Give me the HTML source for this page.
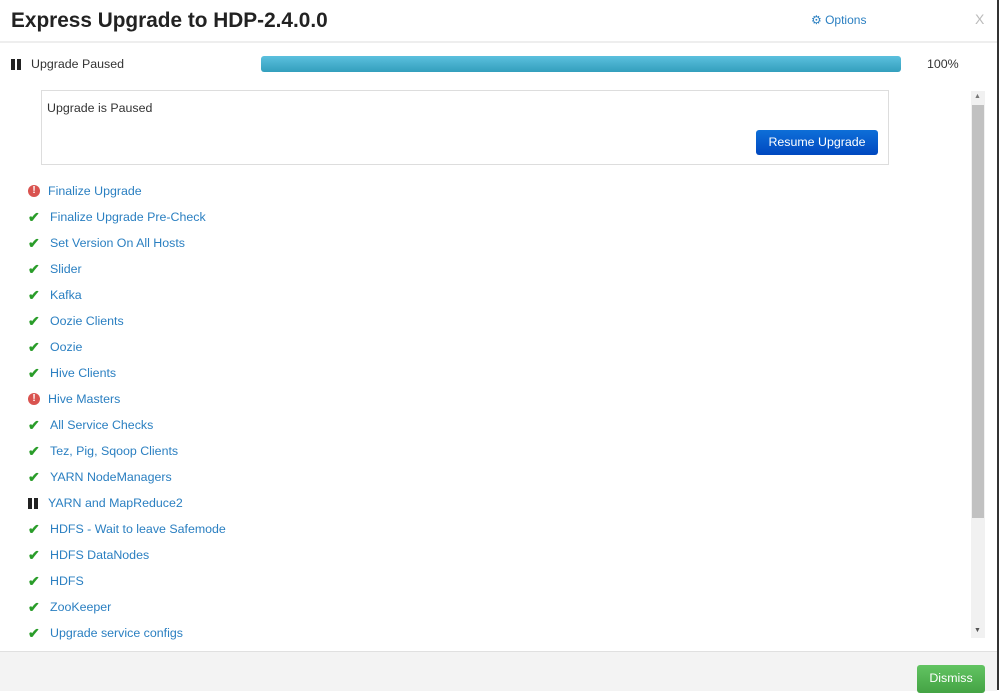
<!DOCTYPE html><html><head><style>
body{margin:0;width:999px;height:690px;overflow:hidden;background:#fff;font-family:"Liberation Sans",sans-serif;font-size:12.4px;color:#333;position:relative}
.a{position:absolute}
.it{position:absolute;left:28px;height:20px;line-height:20px;color:#2a7fc1;display:flex;align-items:center}
.ck{display:inline-block;width:16px;color:#2a9d2a;font-weight:bold;font-size:14px;margin-right:6px}
.er{display:inline-block;width:12px;height:12px;border-radius:50%;background:#d9534f;color:#fff;font-size:10px;line-height:12px;text-align:center;font-weight:bold;margin-right:8px}
.pz{display:inline-block;width:12px;margin-right:8px;height:11px}
.pz i{display:inline-block;width:4px;height:11px;background:#222;margin-right:2px;vertical-align:top}
</style></head><body>
<div class="a" style="left:11px;top:9px;font-size:20.8px;font-weight:bold;color:#222">Express Upgrade to HDP-2.4.0.0</div>
<div class="a" style="left:811px;top:13px;color:#2a7fc1;font-size:12px">⚙ Options</div>
<div class="a" style="left:975px;top:11px;color:#bbb;font-size:14px">X</div>
<div class="a" style="left:0;top:41px;width:997px;height:2px;background:#eee"></div>
<div class="a" style="left:997px;top:0;width:2px;height:690px;background:#333"></div>
<div class="a" style="left:11px;top:57px;display:flex;align-items:center"><span class="pz"><i></i><i></i></span>Upgrade Paused</div>
<div class="a" style="left:261px;top:56px;width:640px;height:16px;border-radius:3px;background:linear-gradient(#5bc0de,#339fbd)"></div>
<div class="a" style="left:927px;top:57px">100%</div>
<div class="a" style="left:41px;top:90px;width:846px;height:73px;border:1px solid #ddd"></div>
<div class="a" style="left:47px;top:101px">Upgrade is Paused</div>
<div class="a" style="left:756px;top:130px;width:122px;height:25px;border-radius:3px;background:linear-gradient(#0e6fd8,#0048c0);color:#fff;text-align:center;line-height:25px">Resume Upgrade</div>
<div class="a" style="left:971px;top:91px;width:14px;height:547px;background:#f1f1f1"></div>
<div class="a" style="left:972px;top:105px;width:12px;height:413px;background:#c1c1c1"></div>
<div class="a" style="left:974px;top:93px;font-size:7px;color:#777">▲</div>
<div class="a" style="left:974px;top:627px;font-size:7px;color:#555">▼</div>
<div class="it" style="top:181px"><span class="er">!</span>Finalize Upgrade</div>
<div class="it" style="top:207px"><span class="ck">✔</span>Finalize Upgrade Pre-Check</div>
<div class="it" style="top:233px"><span class="ck">✔</span>Set Version On All Hosts</div>
<div class="it" style="top:259px"><span class="ck">✔</span>Slider</div>
<div class="it" style="top:285px"><span class="ck">✔</span>Kafka</div>
<div class="it" style="top:311px"><span class="ck">✔</span>Oozie Clients</div>
<div class="it" style="top:337px"><span class="ck">✔</span>Oozie</div>
<div class="it" style="top:363px"><span class="ck">✔</span>Hive Clients</div>
<div class="it" style="top:389px"><span class="er">!</span>Hive Masters</div>
<div class="it" style="top:415px"><span class="ck">✔</span>All Service Checks</div>
<div class="it" style="top:441px"><span class="ck">✔</span>Tez, Pig, Sqoop Clients</div>
<div class="it" style="top:467px"><span class="ck">✔</span>YARN NodeManagers</div>
<div class="it" style="top:493px"><span class="pz"><i></i><i></i></span>YARN and MapReduce2</div>
<div class="it" style="top:519px"><span class="ck">✔</span>HDFS - Wait to leave Safemode</div>
<div class="it" style="top:545px"><span class="ck">✔</span>HDFS DataNodes</div>
<div class="it" style="top:571px"><span class="ck">✔</span>HDFS</div>
<div class="it" style="top:597px"><span class="ck">✔</span>ZooKeeper</div>
<div class="it" style="top:623px"><span class="ck">✔</span>Upgrade service configs</div>
<div class="a" style="left:0;top:651px;width:997px;height:39px;background:#f3f3f3;border-top:1px solid #e0e0e0"></div>
<div class="a" style="left:917px;top:665px;width:68px;height:28px;border-radius:3px;background:linear-gradient(#62c462,#44a344);color:#fff;text-align:center;line-height:26px">Dismiss</div>
</body></html>
